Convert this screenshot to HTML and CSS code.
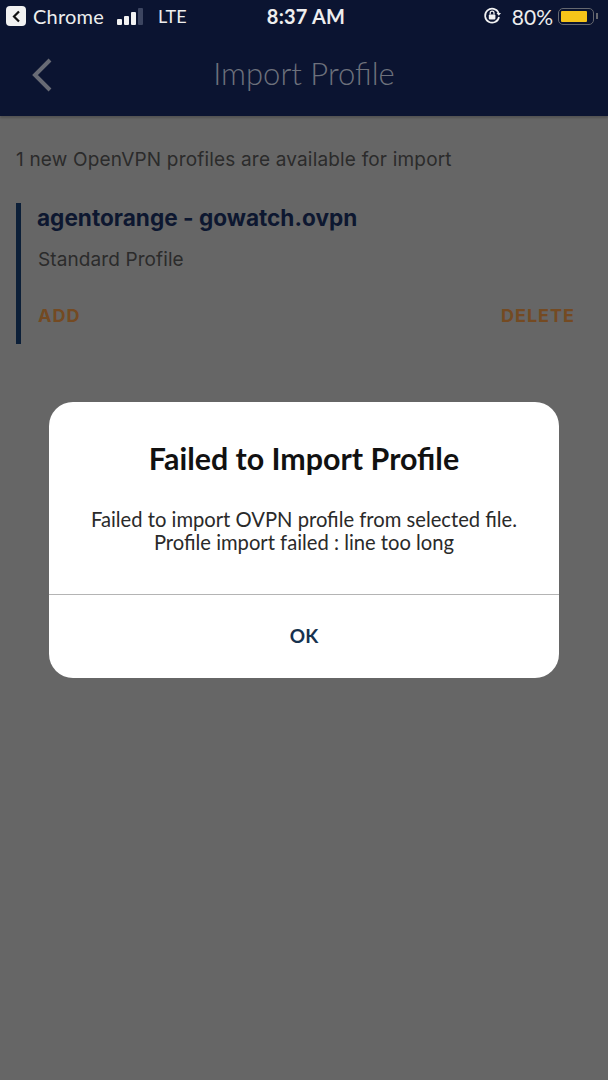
FILE: index.html
```html
<!DOCTYPE html>
<html lang="en">
<head>
<meta charset="utf-8">
<title>Import Profile</title>
<link rel="stylesheet" href="styles.css">
</head>
<body>
<div class="screen">
  <header class="top">
    <div class="status">
      <div class="status-left">
        <span class="back-badge"><svg width="11" height="13" viewBox="0 0 11 13"><path d="M8 1.5 3 6.5l5 5" fill="none" stroke="#111" stroke-width="2.2"/></svg></span>
        <span class="carrier">Chrome</span>
        <span class="bars"><i class="b1"></i><i class="b2"></i><i class="b3"></i><i class="b4"></i></span>
        <span class="lte">LTE</span>
      </div>
      <div class="clock">8:37 AM</div>
      <div class="status-right">
        <svg class="lock" width="19" height="18" viewBox="0 0 19 18"><path d="M15.6 6A7 7 0 1 0 16 10" fill="none" stroke="#f2f2f2" stroke-width="1.7"/><path d="M13.5 6h4.5l-2.2 2.8z" fill="#f2f2f2"/><rect x="5.8" y="7.5" width="6.6" height="5" rx="1" fill="#f2f2f2"/><path d="M7.2 7.5V6a1.9 1.9 0 0 1 3.8 0v1.5" fill="none" stroke="#f2f2f2" stroke-width="1.2"/></svg>
        <span class="pct">80%</span>
        <span class="battery"><span class="cell"><span class="fill"></span></span><span class="nub"></span></span>
      </div>
    </div>
    <div class="nav">
      <svg class="chev" width="24" height="36" viewBox="0 0 24 36"><path d="M20 3 5 18l15 15" fill="none" stroke="#686b75" stroke-width="4"/></svg>
      <h1 class="nav-title">Import Profile</h1>
    </div>
  </header>
  <main class="body">
    <p class="intro">1 new OpenVPN profiles are available for import</p>
    <section class="card">
      <h2 class="name">agentorange - gowatch.ovpn</h2>
      <p class="type">Standard Profile</p>
      <div class="actions"><span>ADD</span><span>DELETE</span></div>
    </section>
  </main>
  <div class="dialog">
    <div class="dialog-main">
      <h3 class="dialog-title">Failed to Import Profile</h3>
      <p class="dialog-text">Failed to import OVPN profile from selected file.<br>Profile import failed : line too long</p>
    </div>
    <div class="dialog-btn">OK</div>
  </div>
</div>
</body>
</html>
```
FILE: styles.css
```css
* { box-sizing: border-box; }
html, body { margin: 0; padding: 0; }
body { width: 608px; height: 1080px; overflow: hidden; background: #666; font-family: "Inter", "Liberation Sans", sans-serif; }
.screen { position: relative; width: 608px; height: 1080px; background: #666; }
.top { height: 116px; background: #0b1431; box-shadow: 0 2px 2px rgba(0,0,0,.2); }
.status { height: 32px; padding: 0 10px 0 6px; display: grid; grid-template-columns: 1fr auto 1fr; align-items: center; color: #eee; }
.status-left { display: flex; align-items: center; }
.back-badge { width: 20px; height: 20px; background: #f2f2f2; border-radius: 4px; display: flex; align-items: center; justify-content: center; }
.carrier { margin-left: 7px; font: 20px "Lato", sans-serif; letter-spacing: .2px; }
.bars { margin-left: 13px; display: flex; align-items: flex-end; gap: 2px; height: 17px; }
.bars i { width: 5px; display: block; background: #f2f2f2; border-radius: 1px; }
.bars .b1 { height: 6px; }
.bars .b2 { height: 9px; }
.bars .b3 { height: 13px; }
.bars .b4 { height: 17px; background: #3c4560; }
.lte { margin-left: 15px; font: 18px "Lato", sans-serif; }
.clock { margin-left: 8px; font: 700 20px "Lato", sans-serif; letter-spacing: .2px; }
.status-right { display: flex; align-items: center; justify-content: flex-end; }
.pct { margin-left: 10px; font: 21px "Lato", sans-serif; }
.battery { margin-left: 5px; display: flex; align-items: center; gap: 2px; }
.cell { width: 36px; height: 17px; border: 1px solid #66686f; border-radius: 5px; padding: 2px; display: block; }
.fill { display: block; width: 26px; height: 100%; background: #f6c419; border-radius: 1px; }
.nub { width: 2px; height: 6px; background: #66686f; }
.nav { height: 84px; position: relative; display: flex; align-items: center; justify-content: center; padding-bottom: 3px; }
.chev { position: absolute; left: 30px; top: 25px; }
.nav-title { margin: 0; font: 300 31px "Lato", sans-serif; color: #6d717c; }
.body { padding: 0 33px 0 16px; }
.intro { margin: 32px 0 0; font-size: 19px; line-height: 24px; letter-spacing: .18px; color: #2b2b2b; }
.card { margin-top: 31px; height: 141px; border-left: 5px solid #0c1f38; padding: 1px 0 0 16px; }
.name { margin: 0; font-size: 22.6px; line-height: 28px; font-weight: 700; color: #0d1730; }
.type { margin: 16px 0 0; padding-left: 1px; font-size: 19px; line-height: 24px; letter-spacing: .1px; color: #2b2b2b; }
.actions { margin-top: 32px; padding-left: 1px; display: flex; justify-content: space-between; font-size: 18px; line-height: 24px; font-weight: 700; letter-spacing: 1px; color: #744a22; }
.dialog { position: absolute; left: 49px; top: 402px; width: 510px; height: 276px; background: #fff; border-radius: 24px; display: flex; flex-direction: column; overflow: hidden; }
.dialog-main { height: 193px; border-bottom: 1px solid #b4b4b4; padding-top: 37px; text-align: center; }
.dialog-title { margin: 0; font: 700 30.4px/38px "Lato", sans-serif; color: #111; }
.dialog-text { margin: 31px 0 0; font: 400 20.2px/23px "Lato", sans-serif; color: #2a2a2a; }
.dialog-btn { flex: 1; display: flex; align-items: center; justify-content: center; padding-bottom: 2px; font: 700 19px "Lato", sans-serif; color: #17324f; }
```
